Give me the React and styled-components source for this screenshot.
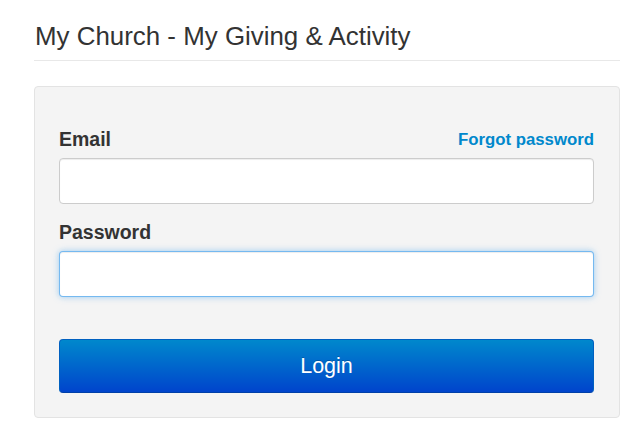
import React from "react";
import styled, { createGlobalStyle } from "styled-components";

const GlobalStyle = createGlobalStyle`
  body {
    margin: 0;
    background: #fff;
    font-family: "Liberation Sans", Arial, sans-serif;
    color: #333;
  }
`;

const Page = styled.div`
  width: 586px;
  padding: 21px 0 0 34px;
`;

const Title = styled.h1`
  margin: 0 0 25px;
  padding: 0 0 0 1px;
  height: 39px;
  font-size: 25.9px;
  line-height: 30px;
  font-weight: normal;
  color: #333;
  border-bottom: 1px solid #e8e8e8;
`;

const Well = styled.form`
  display: flex;
  flex-direction: column;
  padding: 40px 25px 24px 24px;
  background: #f4f4f4;
  border: 1px solid #e3e3e3;
  border-radius: 4px;
`;

const LabelRow = styled.div`
  display: flex;
  justify-content: space-between;
  align-items: baseline;
  margin-top: ${(p) => p.gap || 0}px;
`;

const Label = styled.label`
  font-size: 19.5px;
  line-height: 24px;
  font-weight: bold;
  color: #333;
`;

const ForgotLink = styled.a`
  font-size: 16.8px;
  font-weight: bold;
  color: #0088cc;
  text-decoration: none;
  position: relative;
  top: -1px;
`;

const Input = styled.input`
  box-sizing: border-box;
  width: 100%;
  height: 46px;
  margin-top: 7px;
  padding: 0 12px;
  font-size: 18px;
  font-family: inherit;
  background: #fff;
  border: 1px solid ${(p) => (p.focused ? "rgba(82, 168, 236, 0.8)" : "#ccc")};
  border-radius: 4px;
  outline: none;
  box-shadow: ${(p) =>
    p.focused
      ? "inset 0 1px 1px rgba(0,0,0,.075), 0 0 6px rgba(82,168,236,.55)"
      : "inset 0 1px 1px rgba(0,0,0,.075)"};
`;

const LoginButton = styled.button`
  box-sizing: border-box;
  height: 54px;
  margin-top: 42px;
  font-family: inherit;
  font-size: 21.5px;
  color: #fff;
  text-shadow: 0 -1px 0 rgba(0, 0, 0, 0.2);
  background: linear-gradient(to bottom, #0088cc, #0044cc);
  border: 1px solid #0060c0;
  border-bottom-color: #0040a8;
  border-radius: 4px;
  cursor: pointer;
`;

export default function App() {
  return (
    <>
      <GlobalStyle />
      <Page>
        <Title>My Church - My Giving &amp; Activity</Title>
        <Well onSubmit={(e) => e.preventDefault()}>
          <LabelRow>
            <Label htmlFor="email">Email</Label>
            <ForgotLink href="#">Forgot password</ForgotLink>
          </LabelRow>
          <Input id="email" type="email" />
          <LabelRow gap={16}>
            <Label htmlFor="password">Password</Label>
          </LabelRow>
          <Input id="password" type="password" focused />
          <LoginButton type="submit">Login</LoginButton>
        </Well>
      </Page>
    </>
  );
}
